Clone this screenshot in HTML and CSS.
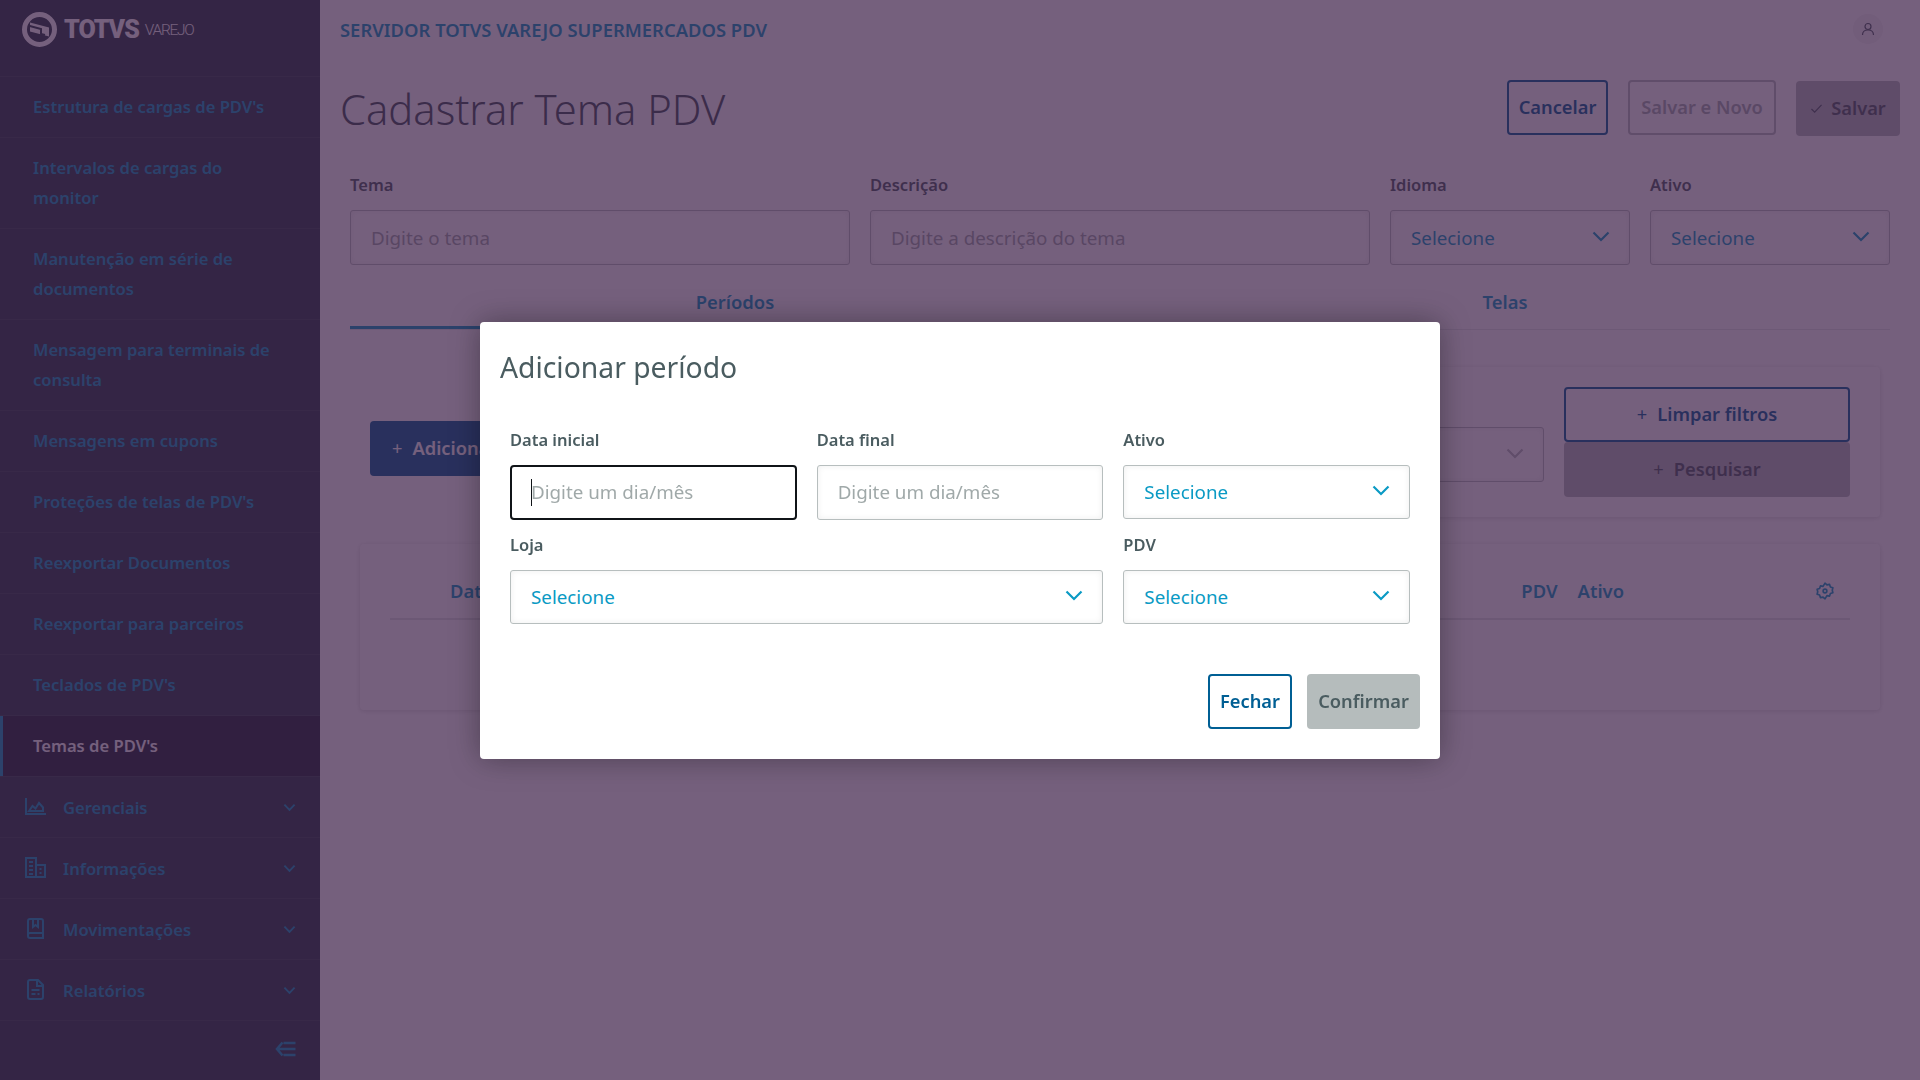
FILE: index.html
```html
<!DOCTYPE html>
<html lang="pt-BR">
<head>
<meta charset="utf-8">
<title>Cadastrar Tema PDV</title>
<link rel="stylesheet" href="styles.css">
</head>
<body>
<div class="app">
  <aside class="sidebar">
    <div class="logo">
      <svg class="logo-mark" viewBox="0 0 35 35"><circle cx="17.500" cy="17.500" r="15" fill="none" stroke="#fff" stroke-width="5"/><path d="M8 10.500l19 5v9L8 19.500z" fill="#fff"/><path d="M6 13.500l13 3.500v5l4 1" fill="none" stroke="#263a43" stroke-width="2"/></svg>
      <span class="logo-name">TOTVS</span><span class="logo-sub">VAREJO</span>
    </div>
    <a class="nav-item">Estrutura de cargas de PDV's</a>
    <a class="nav-item">Intervalos de cargas do monitor</a>
    <a class="nav-item">Manutenção em série de documentos</a>
    <a class="nav-item">Mensagem para terminais de consulta</a>
    <a class="nav-item">Mensagens em cupons</a>
    <a class="nav-item">Proteções de telas de PDV's</a>
    <a class="nav-item">Reexportar Documentos</a>
    <a class="nav-item">Reexportar para parceiros</a>
    <a class="nav-item">Teclados de PDV's</a>
    <a class="nav-item active">Temas de PDV's</a>
    <a class="nav-group">
      <svg class="nav-icon" viewBox="0 0 21 21"><path d="M1 2v16h20M4 15l3.500-5 3 2.500L14 7l4 4.500V15z" fill="none" stroke="currentColor" stroke-width="2"/></svg>
      <span>Gerenciais</span>
      <svg class="nav-chevron" viewBox="0 0 14 9"><path d="M1.500 1.500L7 7l5.500-5.500" fill="none" stroke="currentColor" stroke-width="2"/></svg>
    </a>
    <a class="nav-group">
      <svg class="nav-icon" viewBox="0 0 21 21"><path d="M1 20V1h10v19M11 8h9v12H0M4 5h4M4 9h4M4 13h4M4 17h4M14.500 12h2M14.500 16h2" fill="none" stroke="currentColor" stroke-width="2"/></svg>
      <span>Informações</span>
      <svg class="nav-chevron" viewBox="0 0 14 9"><path d="M1.500 1.500L7 7l5.500-5.500" fill="none" stroke="currentColor" stroke-width="2"/></svg>
    </a>
    <a class="nav-group">
      <svg class="nav-icon" viewBox="0 0 21 21"><path d="M3 17V3a2 2 0 0 1 2-2h11a2 2 0 0 1 2 2v17H5a2 2 0 0 1-2-2v-1a2 2 0 0 1 2-2h13M8 1v8l2.500-2L13 9V1" fill="none" stroke="currentColor" stroke-width="2"/></svg>
      <span>Movimentações</span>
      <svg class="nav-chevron" viewBox="0 0 14 9"><path d="M1.500 1.500L7 7l5.500-5.500" fill="none" stroke="currentColor" stroke-width="2"/></svg>
    </a>
    <a class="nav-group">
      <svg class="nav-icon" viewBox="0 0 21 21"><path d="M3 3a2 2 0 0 1 2-2h8l5 5v12a2 2 0 0 1-2 2H5a2 2 0 0 1-2-2zM12 1v6h6M6.500 11h8M6.500 15h4M12.500 15h2" fill="none" stroke="currentColor" stroke-width="2"/></svg>
      <span>Relatórios</span>
      <svg class="nav-chevron" viewBox="0 0 14 9"><path d="M1.500 1.500L7 7l5.500-5.500" fill="none" stroke="currentColor" stroke-width="2"/></svg>
    </a>
    <div class="collapse">
      <svg viewBox="0 0 20 16"><path d="M7 1.500L1.500 8 7 14.500M2 8h18M8 2h12M8 14h12" fill="none" stroke="currentColor" stroke-width="2.500"/></svg>
    </div>
  </aside>

  <main class="main">
    <header class="topbar">
      <span class="server">SERVIDOR TOTVS VAREJO SUPERMERCADOS PDV</span>
      <span class="avatar"><svg viewBox="0 0 14 14"><circle cx="7" cy="4.500" r="3" fill="none" stroke="currentColor" stroke-width="1.200"/><path d="M1.500 13c0-3 2-5 5.500-5s5.500 2 5.500 5" fill="none" stroke="currentColor" stroke-width="1.200"/></svg></span>
    </header>
    <div class="title-row">
      <h1>Cadastrar Tema PDV</h1>
      <div class="actions">
        <button class="btn outline act-cancel">Cancelar</button>
        <button class="btn outline-muted act-new">Salvar e Novo</button>
        <button class="btn muted act-save"><svg class="btn-check" viewBox="0 0 14 12"><path d="M1.500 6.500L5 10l7.500-8" fill="none" stroke="currentColor" stroke-width="1.300"/></svg>Salvar</button>
      </div>
    </div>
    <div class="form-row">
      <label class="field"><span class="lbl">Tema</span><span class="input ph">Digite o tema</span></label>
      <label class="field"><span class="lbl">Descrição</span><span class="input ph">Digite a descrição do tema</span></label>
      <label class="field"><span class="lbl">Idioma</span><span class="input sel">Selecione<svg class="chev" viewBox="0 0 18 11"><path d="M1.500 1.500L9 9l7.500-7.500" fill="none" stroke="currentColor" stroke-width="2.200"/></svg></span></label>
      <label class="field"><span class="lbl">Ativo</span><span class="input sel">Selecione<svg class="chev" viewBox="0 0 18 11"><path d="M1.500 1.500L9 9l7.500-7.500" fill="none" stroke="currentColor" stroke-width="2.200"/></svg></span></label>
    </div>
    <div class="tabs">
      <span class="tab current">Períodos</span>
      <span class="tab">Telas</span>
    </div>
    <div class="filters-row">
      <button class="btn primary add"><span class="plus">+</span>Adicionar</button>
      <section class="card filters">
        <span class="input sel filter-sel"><svg class="chev" viewBox="0 0 18 11"><path d="M1.500 1.500L9 9l7.500-7.500" fill="none" stroke="currentColor" stroke-width="2.200"/></svg></span>
        <div class="filter-actions">
          <button class="btn outline"><span class="plus">+</span>Limpar filtros</button>
          <button class="btn muted"><span class="plus">+</span>Pesquisar</button>
        </div>
      </section>
    </div>
    <section class="card table-card">
      <div class="thead">
        <span class="th-first">Data</span>
        <span class="th-pdv">PDV</span>
        <span class="th-ativo">Ativo</span>
        <svg class="gear" viewBox="0 0 24 24"><path d="M12 1.500l2.600 2.400 3.500-.7 1.100 3.400 3.300 1.100-.8 3.300.8 3.300-3.300 1.100-1.100 3.400-3.500-.7L12 22.500l-2.600-2.400-3.500.7-1.100-3.400-3.300-1.100.8-3.300-.8-3.300 3.300-1.100 1.100-3.400 3.500.7z" fill="none" stroke="currentColor" stroke-width="2.200" stroke-linejoin="round"/><circle cx="12" cy="12" r="2.500" fill="none" stroke="currentColor" stroke-width="2.200"/></svg>
      </div>
    </section>
  </main>
</div>

<div class="overlay">
  <div class="modal">
    <h2>Adicionar período</h2>
    <div class="modal-grid">
      <label class="field"><span class="lbl">Data inicial</span><span class="input ph focus"><i class="caret"></i>Digite um dia/mês</span></label>
      <label class="field"><span class="lbl">Data final</span><span class="input ph">Digite um dia/mês</span></label>
      <label class="field"><span class="lbl">Ativo</span><span class="input sel short">Selecione<svg class="chev" viewBox="0 0 18 11"><path d="M1.500 1.500L9 9l7.500-7.500" fill="none" stroke="currentColor" stroke-width="2.200"/></svg></span></label>
      <label class="field span2"><span class="lbl">Loja</span><span class="input sel short">Selecione<svg class="chev" viewBox="0 0 18 11"><path d="M1.500 1.500L9 9l7.500-7.500" fill="none" stroke="currentColor" stroke-width="2.200"/></svg></span></label>
      <label class="field"><span class="lbl">PDV</span><span class="input sel short">Selecione<svg class="chev" viewBox="0 0 18 11"><path d="M1.500 1.500L9 9l7.500-7.500" fill="none" stroke="currentColor" stroke-width="2.200"/></svg></span></label>
    </div>
    <div class="modal-actions">
      <button class="btn outline">Fechar</button>
      <button class="btn muted">Confirmar</button>
    </div>
  </div>
</div>
</body>
</html>
```
FILE: styles.css
```css
* { box-sizing: border-box; }
html, body { margin: 0; height: 100%; overflow: hidden; }
body { font-family: "Noto Sans", "Open Sans", sans-serif; color: #4a5c60; background: #fff; }

.app { display: flex; height: 1080px; }

/* sidebar */
.sidebar { width: 320px; flex: none; background: #263a43; color: #0a9ac4; display: flex; flex-direction: column; }
.logo { height: 77px; padding: 12px 0 0 22px; border-bottom: 1px solid #34474f; color: #fff; display: flex; align-items: flex-start; }
.logo-mark { width: 35px; height: 35px; flex: none; }
.logo-name { font: 900 25px/36px "Roboto", sans-serif; margin-left: 7px; letter-spacing: -1px; }
.logo-sub { font: 300 15.500px/36px "Roboto", sans-serif; margin-left: 6px; letter-spacing: -1.300px; }

.nav-item { display: block; padding: 15px 40px 15px 33px; font-size: 16.600px; line-height: 30px; font-weight: 600; border-bottom: 1px solid #34474f; }
.nav-item.active { background: #1c2635; color: #fff; box-shadow: inset 3px 0 0 #0a9ac4; }
.nav-group { display: flex; align-items: center; height: 61px; padding: 0 24px 0 25px; font-size: 16.600px; font-weight: 600; border-bottom: 1px solid #34474f; }
.nav-group span { flex: 1; }
.nav-icon { width: 21px; height: 21px; margin-right: 17px; margin-top: -2px; flex: none; }
.nav-chevron { width: 13px; height: 9px; flex: none; }
.collapse { flex: 1; display: flex; justify-content: flex-end; align-items: center; padding: 0 24px 3px 0; }
.collapse svg { width: 21px; height: 16px; }

/* main */
.main { flex: 1; min-width: 0; display: flex; flex-direction: column; }
.topbar { height: 58px; padding: 0 37px 0 20px; display: flex; align-items: center; justify-content: space-between; }
.server { color: #0a9ac4; font-size: 18.400px; font-weight: 600; }
.avatar { width: 30px; height: 30px; border-radius: 50%; background: #f3f3f3; color: #4a5c60; display: flex; align-items: center; justify-content: center; }
.avatar svg { width: 14px; height: 14px; }

.title-row { display: flex; align-items: flex-start; justify-content: space-between; padding: 21px 20px 0 20px; height: 116px; }
h1 { margin: 0; font-size: 41.700px; line-height: 60px; font-weight: 300; color: #3e5055; }
.actions { display: flex; gap: 20px; align-items: flex-start; padding-top: 1px; }
.act-cancel { width: 101px; }
.act-new { width: 148px; }
.act-save { width: 104px; margin-top: 1px; }

.btn { height: 55px; padding: 0 10px; border-radius: 4px; border: 2px solid transparent; font: 600 18.300px/1 "Noto Sans", sans-serif; display: inline-flex; align-items: center; justify-content: center; background: none; white-space: nowrap; }
.outline { border-color: #005f94; color: #005f94; background: #fff; }
.outline-muted { border-color: #b7bebe; color: #a6afaf; background: #fff; }
.muted { background: #b5bcbc; color: #4a5c60; }
.primary { background: #005f94; color: #fff; }
.btn-check { width: 13px; height: 11px; margin-right: 8px; }
.plus { font-weight: 400; margin-right: 10px; }

.form-row { display: grid; grid-template-columns: 500px 500px 240px 240px; gap: 20px; padding: 0 30px; }
.field { display: flex; flex-direction: column; min-width: 0; }
.lbl { font-size: 16.500px; line-height: 22px; font-weight: 600; color: #4a5c60; height: 36px; }
.input { height: 55px; padding: 0 20px; border: 1px solid #b7bebe; border-radius: 3px; background: #fff; font-size: 18.800px; display: flex; align-items: center; box-shadow: inset 0 0 6px rgba(0,0,0,.07); position: relative; }
.ph { color: #a0a9a9; }
.sel { color: #0a9ac4; justify-content: space-between; padding-right: 19px; }
.short { height: 54px; }
.chev { width: 18px; height: 11px; flex: none; margin-bottom: 2px; }

.tabs { display: grid; grid-template-columns: 770px 770px; margin: 9px 30px 0; height: 56px; border-bottom: 1px solid #e4e8e8; }
.tab { text-align: center; font-size: 18.400px; font-weight: 600; color: #0a9ac4; line-height: 56px; }
.tab.current { border-bottom: 3px solid #0a9ac4; height: 55px; }

.card { background: #fff; border-radius: 4px; box-shadow: 0 1px 5px rgba(0,0,0,.15); }
.filters-row { display: flex; align-items: flex-start; margin: 37px 40px 0 50px; }
.add { margin-top: 54px; padding: 0 20px; flex: none; justify-content: flex-start; }
.filters { flex: 1; height: 150px; margin-left: 100px; padding: 20px 30px 0 0; display: flex; align-items: flex-start; justify-content: flex-end; }
.filter-sel { width: 400px; height: 55px; margin: 40px 20px 0 0; justify-content: flex-end; }
.filter-sel .chev { color: #b7bebe; }
.filter-actions { width: 286px; display: flex; flex-direction: column; flex: none; }

.table-card { height: 166px; margin: 27px 40px 0 40px; padding: 32px 30px 0; }
.thead { display: flex; align-items: center; height: 44px; border-bottom: 2px solid #dfe3e3; color: #0a9ac4; font-size: 18.400px; font-weight: 600; padding-bottom: 13px; }
.th-first { margin-left: 60px; }
.th-pdv { margin-left: auto; }
.th-ativo { margin-left: 20px; }
.gear { width: 18px; height: 18px; margin-left: 192px; margin-right: 16px; }

/* modal */
.overlay { position: fixed; inset: 0; background: rgba(58,28,70,.7); display: flex; align-items: center; justify-content: center; }
.modal { width: 960px; height: 437px; background: #fff; border-radius: 4px; padding: 20px 20px 0; box-shadow: 0 0 30px rgba(0,0,0,.35); display: flex; flex-direction: column; }
h2 { margin: 0; font-size: 28.300px; line-height: 50px; font-weight: 400; color: #4a5c60; }
.modal-grid { display: grid; grid-template-columns: repeat(3, 1fr); column-gap: 20px; row-gap: 0; padding: 0 10px; margin-top: 37px; }
.modal-grid .field { height: 105px; }
.modal-grid .input { flex: none; }
.span2 { grid-column: span 2; }
.focus { border: 2px solid #101418; padding-left: 19px; border-radius: 4px; box-shadow: none; }
.caret { position: absolute; left: 19px; top: 12px; width: 1px; height: 27px; background: #101418; }
.modal-actions { display: flex; justify-content: flex-end; gap: 15px; margin-top: 35px; }
.modal-actions .outline { width: 84px; }
.modal-actions .muted { width: 113px; }
```
